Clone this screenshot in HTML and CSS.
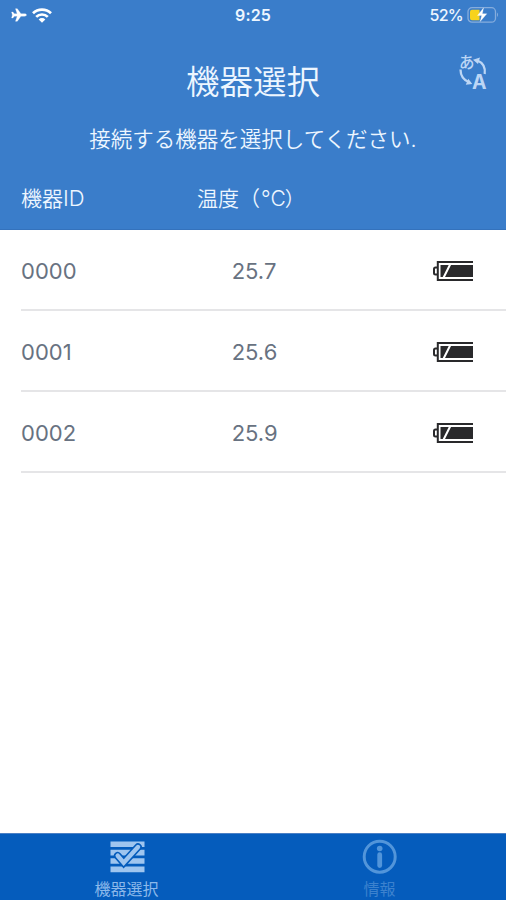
FILE: index.html
```html
<!DOCTYPE html>
<html lang="ja">
<head>
<meta charset="utf-8">
<title>機器選択</title>
<link rel="stylesheet" href="styles.css">
</head>
<body>
<svg width="0" height="0" class="symbols">
  <symbol id="cell" viewBox="0 0 42 22">
    <path d="M41 2H5.800v18H41" fill="none" stroke="#29292b" stroke-width="2"/>
    <path d="M5 7.500H3.500Q2 7.500 2 9v4q0 1.500 1.500 1.500H5" fill="none" stroke="#29292b" stroke-width="2"/>
    <path d="M8.500 5h8.200l-6 12H8.500zM19 5h22v12H13z" fill="#29292b"/>
  </symbol>
</svg>
<div class="screen">
  <header class="header">
    <div class="status">
      <div class="signals">
        <svg class="plane" viewBox="0 0 16 14"><path d="M15.500 7c0-.7-1-1.200-2-1.200H9.900L6.300.7H4.500l1.700 5.100H3.300L1.900 4H.6l.8 3-.8 3h1.300l1.400-1.800h2.900l-1.700 5.100h1.800l3.600-5.100h3.600c1 0 2-.5 2-1.200z" fill="#fff" stroke="#fff" stroke-width=".3"/></svg>
        <svg class="wifi" viewBox="0 0 20 15" fill="none" stroke="#fff"><path d="M1 5.300a12.800 12.800 0 0 1 18 0M4.200 8.900a8.200 8.200 0 0 1 11.600 0" stroke-width="2.700"/><path d="M10 14.700 6.700 11.400a4.700 4.700 0 0 1 6.600 0z" fill="#fff" stroke="none"/></svg>
      </div>
      <div class="clock">9:25</div>
      <div class="power">
        <span>52%</span>
        <svg class="charge" viewBox="0 0 32 18"><rect x="1" y="1.700" width="27.500" height="14.500" rx="4" fill="none" stroke="#86addd" stroke-width="1.300"/><path d="M30 6.500q2 2.200 0 4.600z" fill="#86addd"/><path d="M5 3.700h7.500v10.500H5q-2 0-2-2V5.700q0-2 2-2z" fill="#f7d31c"/><path d="M16.500 1.900 10.500 9.500h4.200l-1.500 6 6.600-7.700h-4.500z" fill="#fff" stroke="#fff" stroke-width=".3"/></svg>
      </div>
    </div>
    <div class="titlebar">
      <h1>機器選択</h1>
      <svg class="language" viewBox="0 0 34 42">
        <text x="2" y="17" class="kana">あ</text>
        <text x="15" y="37.500" class="latin">A</text>
        <path d="M20.500 9.500q8.500 3.500 7.200 13.500M3.500 18.500q0 9.500 9 13" fill="none" stroke="#bcd6f5" stroke-width="2.300"/>
        <path d="M16 8.700l7-2.200-2 6.600zM15.300 33l-6.500.7 2.500-6z" fill="#bcd6f5"/>
      </svg>
    </div>
    <p class="lead">接続する機器を選択してください.</p>
    <div class="columns"><span>機器<span class="id">ID</span></span><span>温度（<span class="unit">°C</span><span class="close">）</span></span></div>
  </header>
  <main class="list">
    <div class="row"><span>0000</span><span class="temp">25.7</span><svg class="cell"><use href="#cell"/></svg></div>
    <div class="row"><span>0001</span><span class="temp">25.6</span><svg class="cell"><use href="#cell"/></svg></div>
    <div class="row"><span>0002</span><span class="temp">25.9</span><svg class="cell"><use href="#cell"/></svg></div>
  </main>
  <nav class="tabs">
    <div class="tab active">
      <svg viewBox="0 0 36 36"><path d="M1.500 5.200h34M1.500 13.600h34M1.500 22h34M1.500 30.400h34" stroke="#9fc5ef" stroke-width="5.600"/><path d="M8.700 16.700l6 7L29 8" fill="none" stroke="#055cbc" stroke-width="7.600" stroke-linecap="round"/><path d="M8.700 16.700l6 7L29 8" fill="none" stroke="#9fc5ef" stroke-width="4.400" stroke-linecap="round"/></svg>
      <span>機器選択</span>
    </div>
    <div class="tab">
      <svg viewBox="0 0 36 36"><circle cx="17.700" cy="17.700" r="15.500" fill="none" stroke="#5295da" stroke-width="3"/><circle cx="17.700" cy="9.500" r="2.800" fill="#5295da"/><path d="M17.700 15.700v10.800" stroke="#5295da" stroke-width="4.800" stroke-linecap="round"/></svg>
      <span>情報</span>
    </div>
  </nav>
</div>
</body>
</html>
```

FILE: styles.css
```css
* { box-sizing: border-box; }
body { margin: 0; background: #fff; font-family: Inter, "Noto Sans CJK JP", sans-serif; }
.symbols { display: block; position: absolute; }
.screen { width: 506px; height: 900px; display: flex; flex-direction: column; }
.header { height: 230px; flex: none; background: #3a7dca; border-bottom: 1px solid #3472bc; color: #edf6ff; }
.status { height: 30px; display: grid; grid-template-columns: 1fr auto 1fr; align-items: center; }
.signals { display: flex; align-items: center; gap: 5px; padding-left: 11px; }
.plane { width: 16px; height: 14px; }
.wifi { width: 20px; height: 15px; }
.clock { font-size: 16px; font-weight: 600; line-height: 30px; letter-spacing: .1px; }
.power { display: flex; align-items: center; justify-content: flex-end; gap: 4px; padding-right: 7px; font-size: 16px; line-height: 30px; letter-spacing: -.7px; font-weight: 500; }
.charge { width: 32px; height: 18px; }
.titlebar { height: 86px; display: grid; grid-template-columns: 1fr auto 1fr; align-items: start; }
h1 { grid-column: 2; margin: 28px 0 0; font-size: 33.500px; line-height: 48px; font-weight: 350; }
.language { width: 34px; height: 42px; justify-self: end; margin: 21px 15px 0 0; overflow: visible; }
.kana { font: 500 15.500px/1 "Noto Sans CJK JP", sans-serif; fill: #bcd6f5; }
.latin { font: 700 19.500px/1 Inter, sans-serif; fill: #bcd6f5; }
.lead { margin: 7px 0 0; font-size: 21.500px; line-height: 32px; text-align: center; font-weight: 350; }
.columns { display: grid; grid-template-columns: 176px 1fr; padding-left: 21px; margin-top: 28px; font-size: 21px; line-height: 32px; font-weight: 350; }
.id { font-size: 22px; line-height: 30px; }
.unit { margin-left: 1px; }
.close { margin-left: -2px; }
.columns .close { font-size: 20px; margin-left: -1px; }
.list { flex: 1; padding-left: 21px; }
.row { height: 81px; padding-top: 2px; display: grid; grid-template-columns: 1fr 1fr 1fr; align-items: center; border-bottom: 2px solid #e5e5e7; color: #687281; font-size: 22px; }
.temp { padding-left: 49px; }
.cell { width: 42px; height: 22px; justify-self: end; margin-right: 32px; }
.tabs { height: 67px; flex: none; display: grid; grid-template-columns: 1fr 1fr; background: #055cbc; border-top: 1px solid #4b80c5; }
.tab { display: flex; flex-direction: column; align-items: center; padding-top: 5px; color: #3c82ce; font-size: 16px; line-height: 24px; }
.tab svg { width: 36px; height: 36px; margin-bottom: 2px; }
.active { color: #8bb8ea; }
```
